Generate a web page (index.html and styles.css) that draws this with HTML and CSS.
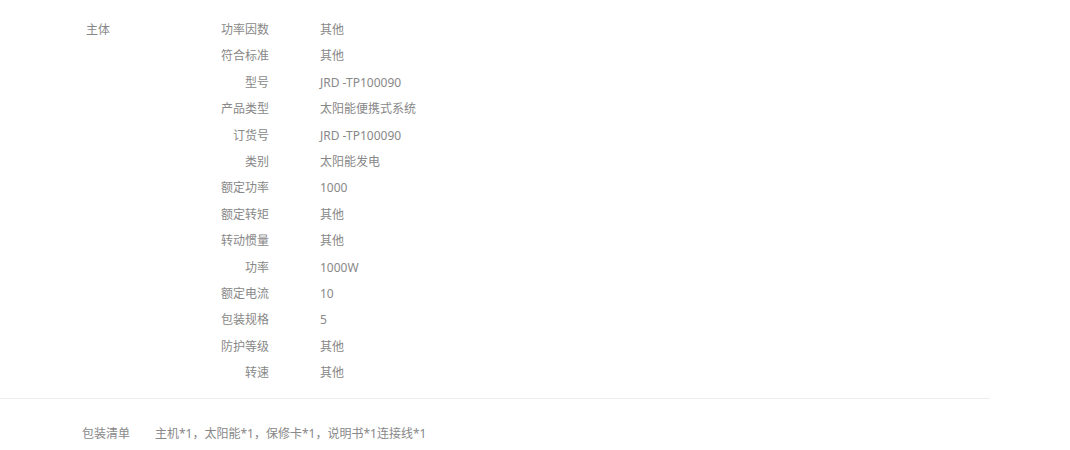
FILE: index.html
```
<!DOCTYPE html>
<html>
<head>
    <title>规格参数</title>
    <link rel="stylesheet" href="styles.css">
</head>
<body>
    <div class="specs">
        <div class="group">
            <div class="group-name">主体</div>
            <dl class="items">
                <div class="row"><dt>功率因数</dt><dd>其他</dd></div>
                <div class="row"><dt>符合标准</dt><dd>其他</dd></div>
                <div class="row"><dt>型号</dt><dd>JRD -TP100090</dd></div>
                <div class="row"><dt>产品类型</dt><dd>太阳能便携式系统</dd></div>
                <div class="row"><dt>订货号</dt><dd>JRD -TP100090</dd></div>
                <div class="row"><dt>类别</dt><dd>太阳能发电</dd></div>
                <div class="row"><dt>额定功率</dt><dd>1000</dd></div>
                <div class="row"><dt>额定转矩</dt><dd>其他</dd></div>
                <div class="row"><dt>转动惯量</dt><dd>其他</dd></div>
                <div class="row"><dt>功率</dt><dd>1000W</dd></div>
                <div class="row"><dt>额定电流</dt><dd>10</dd></div>
                <div class="row"><dt>包装规格</dt><dd>5</dd></div>
                <div class="row"><dt>防护等级</dt><dd>其他</dd></div>
                <div class="row"><dt>转速</dt><dd>其他</dd></div>
            </dl>
        </div>
        <div class="package">
            <span class="package-name">包装清单</span>
            <span class="package-list">主机*1，太阳能*1，保修卡*1，说明书*1连接线*1</span>
        </div>
    </div>
</body>
</html>
```

FILE: styles.css
```
body {
    margin: 0;
    padding: 0;
    background: #fff;
    font-family: "Noto Sans", "Noto Sans CJK SC", sans-serif;
    font-size: 12px;
    color: #888;
}
.specs {
    width: 990px;
}
.group {
    display: flex;
    padding: 17px 0 12px 0;
    border-bottom: 1px solid #eee;
}
.group-name {
    width: 74px;
    padding-left: 86px;
    line-height: 26.4px;
}
.items {
    margin: 0;
}
.row {
    display: flex;
    height: 26.4px;
    line-height: 26.4px;
}
.row dt {
    width: 109px;
    text-align: right;
}
.row dd {
    margin: 0 0 0 51px;
}
.package {
    display: flex;
    padding: 22px 0 0 82px;
    line-height: 26px;
}
.package-name {
    width: 73px;
}
```
